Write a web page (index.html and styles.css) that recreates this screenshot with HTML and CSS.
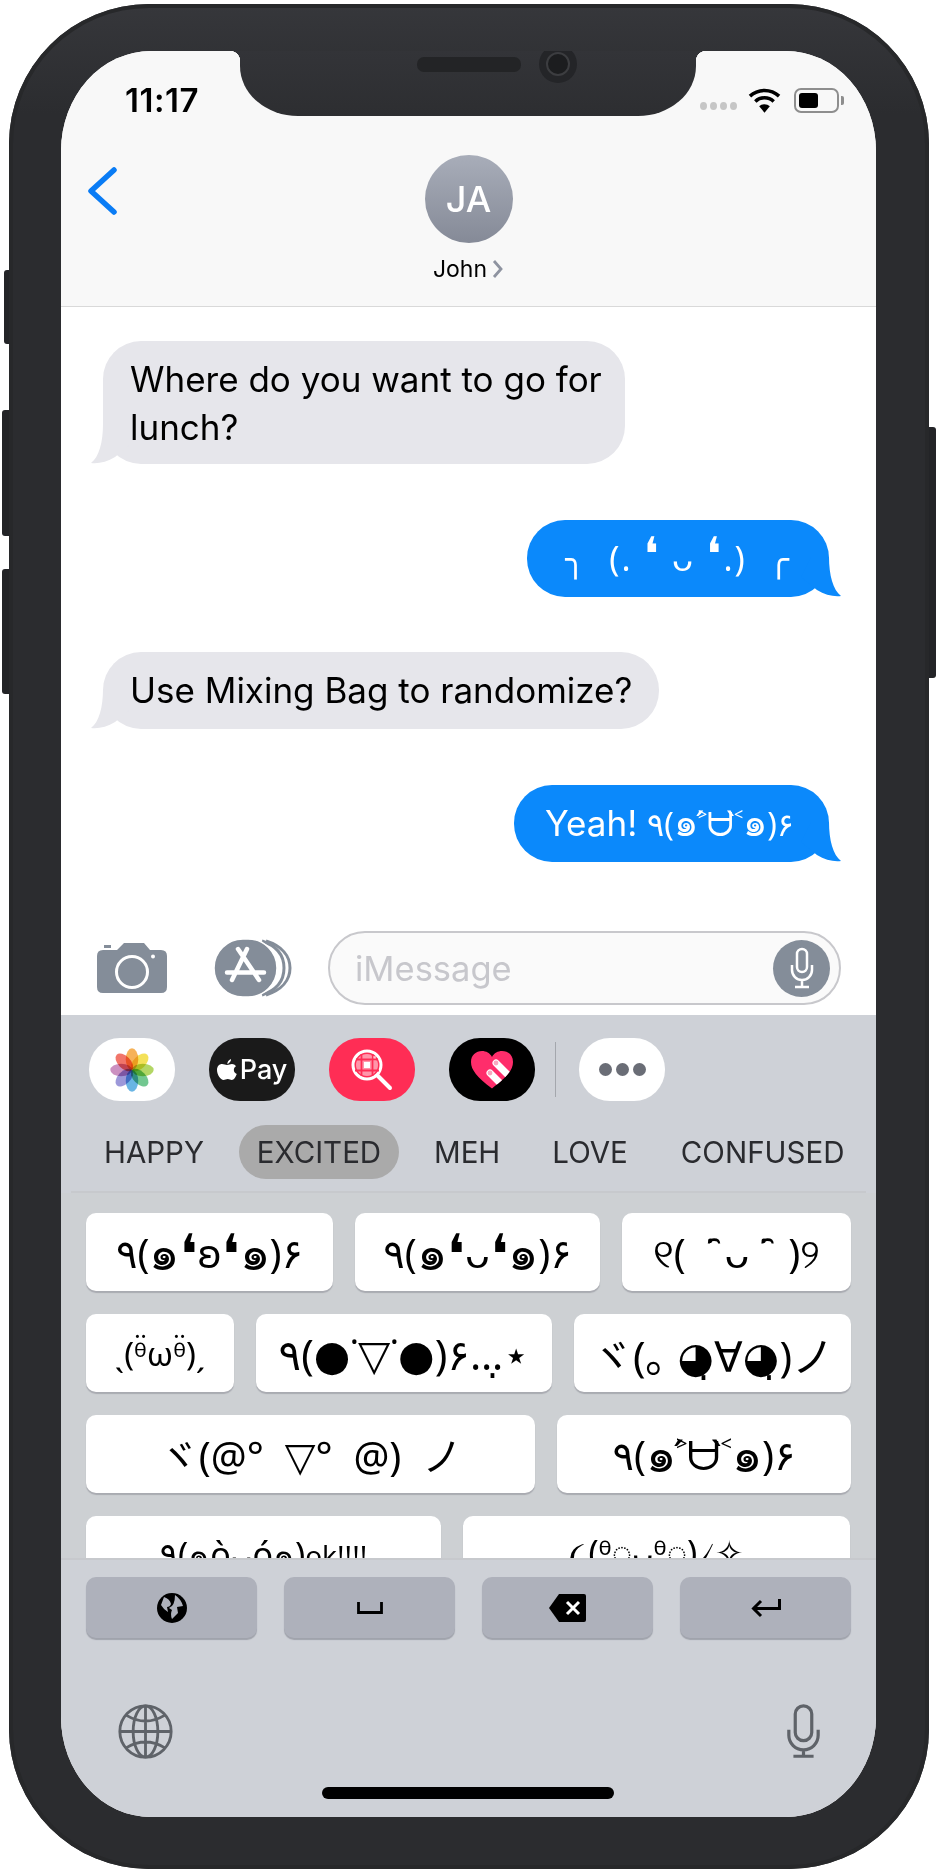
FILE: index.html
```html
<!DOCTYPE html>
<html lang="en">
<head>
    <meta charset="UTF-8">
    <title>Messages</title>
    <link rel="stylesheet" href="styles.css">
</head>
<body>
    <div class="phone">
        <div class="side-btn btn-silent"></div>
        <div class="side-btn btn-up"></div>
        <div class="side-btn btn-down"></div>
        <div class="side-btn btn-power"></div>

        <div class="screen">
            <div class="top-bar">
                <div class="status">
                    <span class="time">11:17</span>
                    <div class="status-icons">
                        <div class="signal"><i></i><i></i><i></i><i></i></div>
                        <svg class="wifi" viewBox="0 0 34 25" width="33" height="25"><path d="M17 25l-5.500-6.500a8 8 0 0 1 11 0z" fill="#000"/><path d="M7.500 13.500a14 14 0 0 1 19 0" fill="none" stroke="#000" stroke-width="3.600"/><path d="M2 8a22 22 0 0 1 30 0" fill="none" stroke="#000" stroke-width="3.600"/></svg>
                        <div class="battery"><div class="battery-level"></div></div>
                        <div class="battery-cap"></div>
                    </div>
                </div>
                <div class="nav">
                    <svg class="back" viewBox="0 0 30 48" width="30" height="48"><path d="M27 3L4 24l23 21" fill="none" stroke="#0a7cf5" stroke-width="5.500" stroke-linecap="round" stroke-linejoin="round"/></svg>
                    <div class="contact">
                        <div class="avatar">JA</div>
                        <div class="contact-name">John <svg viewBox="0 0 12 20" width="12" height="20"><path d="M2 2l7 8-7 8" fill="none" stroke="#8e93a0" stroke-width="2.800"/></svg></div>
                    </div>
                </div>
            </div>

            <div class="notch">
                <div class="speaker"></div>
                <div class="camera"><div class="lens"></div></div>
            </div>

            <div class="thread">
                <div class="bubble in bubble-wrap">Where do you want to go for lunch?</div>
                <div class="bubble out out-1">╮ &nbsp;(. <span class="eye">❛</span> ᴗ <span class="eye">❛</span>.) &nbsp;╭</div>
                <div class="bubble in">Use Mixing Bag to randomize?</div>
                <div class="bubble out out-2">Yeah! <span class="face-inline">٩(<span class="th">๑</span>˃́ᗨ˂̀<span class="th">๑</span>)۶</span></div>
            </div>

            <div class="composer">
                <svg class="cam-icon" viewBox="0 0 70 54" width="70" height="54"><path d="M6 9h14l7-7h20l6 7h11q6 0 6 6v31q0 6-6 6H6q-6 0-6-6V15q0-6 6-6z" fill="#848d99"/><rect x="7" y="4" width="7" height="3" fill="#848d99"/><circle cx="35" cy="31" r="15.500" fill="none" stroke="#fff" stroke-width="3"/><circle cx="56" cy="15.500" r="2" fill="#fff"/></svg>
                <svg class="store-icon" viewBox="0 0 78 60" width="78" height="60"><path d="M52 3C68 8 76 18 76 30S68 52 52 57" fill="none" stroke="#848d99" stroke-width="3"/><path d="M48 3C63 8 70 18 70 30S63 52 48 57" fill="none" stroke="#848d99" stroke-width="3"/><rect x="0" y="1" width="63" height="58" rx="29" fill="#848d99" stroke="#fff" stroke-width="1.500"/><path d="M33 11L18 42M24 11L45 42M13 34.500h37" fill="none" stroke="#fff" stroke-width="4.500" stroke-linecap="round"/></svg>
                <div class="input">
                    <span class="placeholder">iMessage</span>
                    <div class="input-mic">
                        <svg viewBox="0 0 30 42" width="30" height="42"><rect x="10" y="2" width="10" height="23" rx="5" fill="none" stroke="#fff" stroke-width="2.500"/><path d="M5 18v5a10 10 0 0 0 20 0v-5M15 33v6M8 40h14" fill="none" stroke="#fff" stroke-width="2.500"/></svg>
                    </div>
                </div>
            </div>

            <div class="keyboard">
                <div class="apps">
                    <div class="app app-white">
                        <svg viewBox="-30 -30 60 60" width="50" height="50">
                            <g class="petals">
                                <ellipse cx="0" cy="-13" rx="7.500" ry="13" fill="#f5a43a"/>
                                <ellipse cx="0" cy="-13" rx="7.500" ry="13" fill="#f2dc3c" transform="rotate(45)"/>
                                <ellipse cx="0" cy="-13" rx="7.500" ry="13" fill="#a6cf4a" transform="rotate(90)"/>
                                <ellipse cx="0" cy="-13" rx="7.500" ry="13" fill="#59bd7c" transform="rotate(135)"/>
                                <ellipse cx="0" cy="-13" rx="7.500" ry="13" fill="#4fa8e0" transform="rotate(180)"/>
                                <ellipse cx="0" cy="-13" rx="7.500" ry="13" fill="#8b86d3" transform="rotate(225)"/>
                                <ellipse cx="0" cy="-13" rx="7.500" ry="13" fill="#c27cb5" transform="rotate(270)"/>
                                <ellipse cx="0" cy="-13" rx="7.500" ry="13" fill="#ef5d50" transform="rotate(315)"/>
                            </g>
                        </svg>
                    </div>
                    <div class="app app-pay">
                        <svg viewBox="0 0 20 24" width="20" height="24"><path d="M14 1q.2 3-3.600 5.200Q10 3 14 1zM10 7c2 0 3-1 5-1 1.500 0 3 .8 4 2.200-3.200 2-2.700 6.300.8 7.800-1.200 3-3 6-5 6-1.500 0-2.200-1-4-1s-2.800 1-4.200 1C3.500 22 0 16.500 0 12c0-4 2.500-6 5-6 2 0 3.500 1 5 1z" fill="#fff"/></svg>
                        <span>Pay</span>
                    </div>
                    <div class="app app-search">
                        <svg viewBox="0 0 42 42" width="42" height="42"><circle cx="16" cy="16" r="14" fill="none" stroke="#fff" stroke-width="3"/><circle cx="16" cy="16" r="11" fill="#fff" opacity=".5"/><rect x="13" y="13" width="6" height="6" fill="#fff"/><rect x="20" y="7" width="5" height="5" fill="#fff" opacity=".5"/><path d="M5 10.500h22M4 21.500h24M10.500 5v22M21.500 5v22" stroke="#ff2d55" stroke-width="1.800"/><path d="M27 27l12 12" stroke="#fff" stroke-width="4" stroke-linecap="round"/></svg>
                    </div>
                    <div class="app app-black">
                        <svg viewBox="0 0 44 39" width="44" height="39">
                            <defs><clipPath id="heart-clip"><path d="M22 38.500C7 27 1 20 1 12 1 5 6 1 12 1c4 0 8 2 10 6 2-4 6-6 10-6 6 0 11 4 11 11 0 8-6 15-21 26.500z"/></clipPath></defs>
                            <path d="M22 38.500C7 27 1 20 1 12 1 5 6 1 12 1c4 0 8 2 10 6 2-4 6-6 10-6 6 0 11 4 11 11 0 8-6 15-21 26.500z" fill="#ff2d6b"/>
                            <g clip-path="url(#heart-clip)"><path d="M26 13l14 14M20 23l13 13" stroke="#fff" stroke-width="7" stroke-linecap="round"/></g>
                            <circle cx="26" cy="13" r="2.400" fill="#f9a8c0"/><circle cx="20" cy="23" r="2.400" fill="#f9a8c0"/>
                        </svg>
                    </div>
                    <div class="app-divider"></div>
                    <div class="app app-white app-more"><i></i><i></i><i></i></div>
                </div>

                <div class="tabs">
                    <span class="tab tab-happy">HAPPY</span>
                    <span class="tab tab-active">EXCITED</span>
                    <span class="tab tab-meh">MEH</span>
                    <span class="tab tab-love">LOVE</span>
                    <span class="tab tab-confused">CONFUSED</span>
                </div>

                <div class="faces">
                    <div class="face-row row-a">
                        <div class="face">٩(<span class="th">๑</span><span class="eye">❛</span>ʚ<span class="eye">❛</span><span class="th">๑</span>)۶</div>
                        <div class="face">٩(<span class="th">๑</span><span class="eye">❛</span>ᴗ<span class="eye">❛</span><span class="th">๑</span>)۶</div>
                        <div class="face">୧( &nbsp;˙̑ ᴗ ˙̑ &nbsp;)୨</div>
                    </div>
                    <div class="face-row row-b">
                        <div class="face face-small">ˎ(ᶿ̈ωᶿ̈)ˏ</div>
                        <div class="face face-mid">٩(●˙▽˙●)۶…⋆̣</div>
                        <div class="face face-mid">ヾ(｡ ◕̣∀◕̣)ノ</div>
                    </div>
                    <div class="face-row row-c">
                        <div class="face">ヾ(@°&nbsp;&nbsp;▽°&nbsp;&nbsp;@)&nbsp;&nbsp;ノ</div>
                        <div class="face">٩(<span class="th">๑</span>˃́ᗨ˂̀<span class="th">๑</span>)۶</div>
                    </div>
                    <div class="face-row row-d">
                        <div class="face face-top">٩(๑òᴗó๑)<sup>ok!!!!</sup></div>
                        <div class="face face-top">૮(ᶿ◌ᴗᶿ◌)৴✧</div>
                    </div>
                </div>

                <div class="actions">
                    <div class="action"><svg viewBox="0 0 32 32" width="32" height="32"><circle cx="16" cy="16" r="15" fill="#000"/><path d="M8 5q6 2 7 7-1 3-4 3l1 5q-4-2-7-7zM19 3q6 4 8 11l-6 1 1 6-6 6q-2-5 0-9l-3-2q6-2 6-13z" fill="#aeb1bb"/></svg></div>
                    <div class="action"><svg viewBox="0 0 26 12" width="26" height="12"><path d="M1.500 0v10.500h23V0" fill="none" stroke="#000" stroke-width="2.800"/></svg></div>
                    <div class="action"><svg viewBox="0 0 37 28" width="37" height="28"><path d="M10 0h25q2 0 2 2v24q0 2-2 2H10L0 14z" fill="#000"/><path d="M18 8l12 12M30 8L18 20" stroke="#fff" stroke-width="3"/></svg></div>
                    <div class="action"><svg viewBox="0 0 30 20" width="30" height="20"><path d="M28.500 1v9.500H3M10 3l-7.500 7.500L10 18" fill="none" stroke="#000" stroke-width="3"/></svg></div>
                </div>

                <div class="system-row">
                    <svg viewBox="0 0 60 60" width="57" height="57"><g fill="none" stroke="#5f6369" stroke-width="3"><circle cx="30" cy="30" r="27"/><ellipse cx="30" cy="30" rx="13" ry="27"/><path d="M3 30h54M30 3v54M10 13q20 12 40 0M10 47q20-12 40 0"/></g></svg>
                    <svg viewBox="0 0 36 60" width="33" height="55"><g fill="none" stroke="#5f6369" stroke-width="3.500"><rect x="9" y="2" width="18" height="38" rx="9"/><path d="M2 28v6a16 16 0 0 0 32 0v-6M18 50v7M7 57h22"/></g></svg>
                </div>
                <div class="home-bar"></div>
            </div>
        </div>
    </div>
</body>
</html>
```

FILE: styles.css
```css
body {
    margin: 0;
    background-color: white;
    font-family: Inter, "Noto Sans", "DejaVu Sans", sans-serif;
}
.phone {
    position: relative;
    box-sizing: border-box;
    width: 920px;
    height: 1865px;
    margin: 4px 0 0 9px;
    padding: 47px 53px 50px 52px;
    background: linear-gradient(#36373b, #2b2c2f 110px);
    border-radius: 140px;
    box-shadow: inset 0 0 0 4px #27282a;
}
.side-btn {
    position: absolute;
    background-color: #232427;
}
.btn-silent {
    left: -5px;
    top: 266px;
    width: 5px;
    height: 74px;
    border-radius: 3px 0 0 3px;
}
.btn-up {
    left: -7px;
    top: 406px;
    width: 7px;
    height: 126px;
    border-radius: 3px 0 0 3px;
}
.btn-down {
    left: -7px;
    top: 565px;
    width: 7px;
    height: 125px;
    border-radius: 3px 0 0 3px;
}
.btn-power {
    right: -7px;
    top: 423px;
    width: 7px;
    height: 251px;
    border-radius: 0 3px 3px 0;
}
.screen {
    position: relative;
    height: 1766px;
    background-color: white;
    border-radius: 90px / 100px;
    overflow: hidden;
}

.notch {
    position: absolute;
    top: 0;
    left: 179px;
    width: 456px;
    height: 65px;
    background: linear-gradient(#333438, #2d2e31);
    border-radius: 0 0 58px 58px / 0 0 50px 50px;
}
.notch::before,
.notch::after {
    content: "";
    position: absolute;
    top: 0;
    width: 10px;
    height: 10px;
}
.notch::before {
    left: -10px;
    background: radial-gradient(circle at 0 100%, transparent 10px, #333438 10.500px);
}
.notch::after {
    right: -10px;
    background: radial-gradient(circle at 100% 100%, transparent 10px, #333438 10.500px);
}
.speaker {
    position: absolute;
    left: 177px;
    top: 6px;
    width: 104px;
    height: 15px;
    background-color: #232426;
    border-radius: 7px;
}
.camera {
    position: absolute;
    left: 299px;
    top: -6px;
    width: 38px;
    height: 38px;
    background-color: #242528;
    border-radius: 50%;
}
.lens {
    box-sizing: border-box;
    width: 24px;
    height: 24px;
    margin: 7px;
    background-color: #1c1d1f;
    border: 2px solid #3c3d40;
    border-radius: 50%;
}

.top-bar {
    height: 255px;
    background-color: #f8f8f8;
    border-bottom: 1px solid #d9d9d9;
}
.status {
    display: flex;
    justify-content: space-between;
    align-items: center;
    box-sizing: border-box;
    height: 88px;
    padding: 10px 32px 0 64px;
}
.time {
    font-size: 33px;
    font-weight: 600;
    letter-spacing: .5px;
    color: black;
}
.status-icons {
    display: flex;
    align-items: center;
}
.signal {
    display: flex;
    gap: 3px;
    margin: 12px 11px 0 0;
}
.signal i {
    width: 7px;
    height: 8px;
    background-color: #c6c6c6;
    border-radius: 50%;
}
.wifi {
    margin-right: 13px;
}
.battery {
    box-sizing: border-box;
    width: 45px;
    height: 25px;
    padding: 3px;
    border: 2px solid #8e8e8e;
    border-radius: 7px;
}
.battery-level {
    width: 19px;
    height: 100%;
    background-color: black;
    border-radius: 3px;
}
.battery-cap {
    width: 3px;
    height: 9px;
    margin-left: 2px;
    background-color: #8e8e8e;
    border-radius: 0 2px 2px 0;
}
.nav {
    position: relative;
    display: flex;
    justify-content: center;
}
.back {
    position: absolute;
    left: 26px;
    top: 28px;
}
.contact {
    display: flex;
    flex-direction: column;
    align-items: center;
}
.avatar {
    display: flex;
    align-items: center;
    justify-content: center;
    width: 88px;
    height: 88px;
    margin-top: 16px;
    font-size: 36px;
    font-weight: 500;
    color: white;
    background: linear-gradient(#a8adb9, #858a97);
    border-radius: 50%;
}
.contact-name {
    display: flex;
    align-items: center;
    gap: 5px;
    margin-top: 12px;
    font-size: 23px;
    color: black;
}

.thread {
    display: flex;
    flex-direction: column;
    align-items: flex-start;
    box-sizing: border-box;
    height: 606px;
    padding: 34px 47px 0 42px;
}
.bubble {
    position: relative;
    flex: none;
    box-sizing: border-box;
    height: 77px;
    padding: 0 27px;
    font-size: 35px;
    line-height: 77px;
    white-space: nowrap;
    border-radius: 38px;
}
.bubble::after {
    content: "";
    position: absolute;
    bottom: 0;
    width: 40px;
    height: 40px;
    background-color: inherit;
}
.in {
    margin-bottom: 56px;
    color: black;
    background-color: #e6e6eb;
}
.in::after {
    left: -12px;
    clip-path: path("M12 0 C12 18 8 33 0 39 C7 40 16 38 24 33 L40 20 L30 0 Z");
}
.out {
    align-self: flex-end;
    margin-bottom: 55px;
    color: white;
    background-color: #0b89fb;
}
.out::after {
    right: -12px;
    clip-path: path("M28 0 C28 18 32 33 40 39 C33 40 24 38 16 33 L0 20 L10 0 Z");
}
.bubble-wrap {
    width: 522px;
    height: 123px;
    padding: 14px 10px 0 27px;
    line-height: 48px;
    white-space: normal;
}
.out-1 {
    width: 302px;
    padding: 0;
    font-size: 34px;
    letter-spacing: 2px;
    text-align: center;
    font-family: "Noto Sans", "DejaVu Sans", "Noto Sans CJK JP", sans-serif;
}
.out-2 {
    width: 315px;
    padding: 0 0 0 31px;
}
.face-inline {
    font-size: 32px;
    font-family: "Noto Sans", "DejaVu Sans", "Noto Sans CJK JP", sans-serif;
}
.eye {
    font-size: 1.400em;
    line-height: 0;
}
.th {
    font-size: 1.200em;
    font-weight: 300;
    line-height: 0;
}

.composer {
    display: flex;
    align-items: center;
    box-sizing: border-box;
    height: 102px;
    padding: 8px 35px 0 36px;
}
.cam-icon {
    margin-right: 47px;
}
.store-icon {
    margin-right: 36px;
}
.input {
    display: flex;
    align-items: center;
    justify-content: space-between;
    box-sizing: border-box;
    flex: 1;
    height: 74px;
    padding: 0 9px 0 25px;
    background-color: #fafafa;
    border: 2px solid #c8c8cc;
    border-radius: 37px;
}
.placeholder {
    font-size: 34.500px;
    color: #c7c7cc;
}
.input-mic {
    display: flex;
    align-items: center;
    justify-content: center;
    width: 57px;
    height: 57px;
    background-color: #848d99;
    border-radius: 50%;
}

.keyboard {
    position: relative;
    height: 802px;
    background-color: #ced1d7;
}
.apps {
    display: flex;
    align-items: center;
    height: 63px;
    padding: 23px 0 0 28px;
}
.app {
    display: flex;
    align-items: center;
    justify-content: center;
    width: 86px;
    height: 63px;
    margin-right: 34px;
    border-radius: 31px;
}
.app-white {
    background-color: white;
}
.app-pay {
    gap: 3px;
    font-size: 27px;
    font-weight: 500;
    color: white;
    background-color: #1a1a1a;
}
.app-search {
    background-color: #ff2d55;
}
.app-black {
    margin-right: 20px;
    background-color: black;
}
.app-divider {
    width: 1px;
    height: 55px;
    margin-right: 23px;
    background-color: #a4a7ad;
}
.app-more {
    gap: 4px;
}
.app-more i {
    width: 13px;
    height: 13px;
    background-color: #6a6d76;
    border-radius: 50%;
}
.petals ellipse {
    opacity: .85;
    mix-blend-mode: multiply;
}

.tabs {
    display: flex;
    align-items: center;
    height: 54px;
    margin: 24px 10px 0;
    padding-bottom: 12px;
    border-bottom: 2px solid #c7c9cd;
    font-size: 29.500px;
    color: #2a2b2f;
}
.tab-happy {
    margin-left: 33px;
}
.tab-active {
    width: 160px;
    margin-left: 35px;
    line-height: 54px;
    text-align: center;
    background-color: #aaaaaa;
    border-radius: 27px;
}
.tab-meh {
    margin-left: 35px;
}
.tab-love {
    margin-left: 52px;
}
.tab-confused {
    margin-left: 53px;
}

.faces {
    display: flex;
    flex-direction: column;
    gap: 23px;
    box-sizing: border-box;
    height: 367px;
    padding: 20px 25px 0;
    overflow: hidden;
    background-color: #cdd0d3;
    border-bottom: 2px solid #c7c9cd;
    font-family: "Noto Sans", "DejaVu Sans", "Noto Sans CJK JP", sans-serif;
}
.face-row {
    display: flex;
    flex: none;
    gap: 22px;
}
.face {
    display: flex;
    flex: none;
    align-items: center;
    justify-content: center;
    height: 78px;
    font-size: 40px;
    color: black;
    white-space: nowrap;
    background-color: white;
    border-radius: 10px;
    box-shadow: 0 2px 1px #a9abb1;
}
.face-small {
    font-size: 33px;
}
.face-mid {
    font-size: 42px;
}
.face-top {
    font-size: 34px;
}
.face-top sup {
    font-size: 28px;
    line-height: 0;
}
.row-a .face:nth-child(1) { width: 247px; }
.row-a .face:nth-child(2) { width: 245px; }
.row-a .face:nth-child(3) { width: 229px; }
.row-b .face:nth-child(1) { width: 148px; }
.row-b .face:nth-child(2) { width: 296px; }
.row-b .face:nth-child(3) { width: 277px; }
.row-c .face:nth-child(1) { width: 449px; }
.row-c .face:nth-child(2) { width: 294px; }
.row-d .face:nth-child(1) { width: 355px; }
.row-d .face:nth-child(2) { width: 387px; }

.actions {
    display: flex;
    gap: 27px;
    padding: 17px 25px 0;
}
.action {
    display: flex;
    flex: 1;
    align-items: center;
    justify-content: center;
    height: 61px;
    background-color: #aeb1bb;
    border-radius: 10px;
    box-shadow: 0 2px 1px #a0a3ac;
}
.system-row {
    display: flex;
    justify-content: space-between;
    align-items: center;
    padding: 65px 56px 0 56px;
}
.home-bar {
    position: absolute;
    left: 261px;
    bottom: 18px;
    width: 292px;
    height: 12px;
    background-color: black;
    border-radius: 6px;
}
```
